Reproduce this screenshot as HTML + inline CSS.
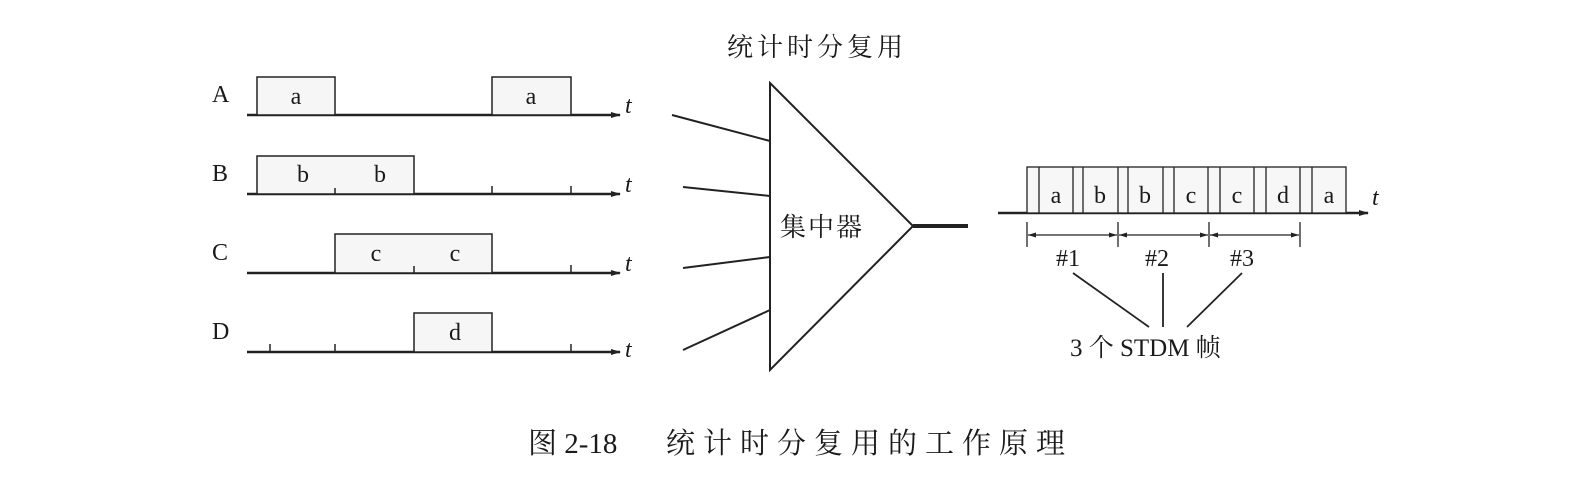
<!DOCTYPE html>
<html><head><meta charset="utf-8"><style>
html,body{margin:0;padding:0;background:#fff;}
svg{display:block}
text{fill:#1a1a1a}
.s{font-family:"Liberation Serif","Noto Serif CJK SC",serif;}
.c{font-family:"Liberation Serif","Noto Serif CJK SC","Noto Sans CJK SC",serif;}
</style></head><body>
<svg width="1580" height="482" viewBox="0 0 1580 482" xmlns="http://www.w3.org/2000/svg">
<defs>
<marker id="ar" markerWidth="10" markerHeight="8" refX="9" refY="4" orient="auto" markerUnits="userSpaceOnUse"><path d="M0,1 L10,4 L0,7 Z" fill="#222"/></marker>
<marker id="sa" markerWidth="8" markerHeight="6" refX="8" refY="3" orient="auto" markerUnits="userSpaceOnUse"><path d="M0,0.5 L8,3 L0,5.5 Z" fill="#222"/></marker>
<marker id="sb" markerWidth="8" markerHeight="6" refX="0" refY="3" orient="auto" markerUnits="userSpaceOnUse"><path d="M8,0.5 L0,3 L8,5.5 Z" fill="#222"/></marker>
</defs>
<g stroke="#222" fill="none">
<line x1="247" y1="115" x2="620" y2="115" stroke-width="2.5" marker-end="url(#ar)"/>
<rect x="257" y="77" width="78" height="38" stroke-width="1.5" fill="#f6f6f6"/>
<rect x="492" y="77" width="79" height="38" stroke-width="1.5" fill="#f6f6f6"/>
<line x1="247" y1="194" x2="620" y2="194" stroke-width="2.5" marker-end="url(#ar)"/>
<rect x="257" y="156" width="157" height="38" stroke-width="1.5" fill="#f6f6f6"/>
<line x1="335" y1="188" x2="335" y2="194" stroke-width="1.5"/>
<line x1="492" y1="186" x2="492" y2="194" stroke-width="1.5"/>
<line x1="571" y1="186" x2="571" y2="194" stroke-width="1.5"/>
<line x1="247" y1="273" x2="620" y2="273" stroke-width="2.5" marker-end="url(#ar)"/>
<rect x="335" y="234" width="157" height="39" stroke-width="1.5" fill="#f6f6f6"/>
<line x1="414" y1="266" x2="414" y2="273" stroke-width="1.5"/>
<line x1="571" y1="265" x2="571" y2="273" stroke-width="1.5"/>
<line x1="247" y1="352" x2="620" y2="352" stroke-width="2.5" marker-end="url(#ar)"/>
<rect x="414" y="313" width="78" height="39" stroke-width="1.5" fill="#f6f6f6"/>
<line x1="270" y1="344" x2="270" y2="352" stroke-width="1.5"/>
<line x1="335" y1="344" x2="335" y2="352" stroke-width="1.5"/>
<line x1="571" y1="344" x2="571" y2="352" stroke-width="1.5"/>
<line x1="672" y1="115" x2="770" y2="141" stroke-width="2"/>
<line x1="683" y1="187" x2="770" y2="196" stroke-width="2"/>
<line x1="683" y1="268" x2="770" y2="257" stroke-width="2"/>
<line x1="683" y1="350" x2="770" y2="310" stroke-width="2"/>
<path d="M770,83 L913,226 L770,370 Z" stroke-width="2"/>
<line x1="913" y1="226" x2="968" y2="226" stroke-width="4"/>
<line x1="998" y1="213" x2="1368" y2="213" stroke-width="2.5" marker-end="url(#ar)"/>
<rect x="1027" y="167" width="319" height="46" stroke-width="1.3" fill="#f7f7f7"/>
<g stroke-width="1.3">
<line x1="1039" y1="167" x2="1039" y2="213"/>
<line x1="1073" y1="167" x2="1073" y2="213"/>
<line x1="1083" y1="167" x2="1083" y2="213"/>
<line x1="1118" y1="167" x2="1118" y2="213"/>
<line x1="1128" y1="167" x2="1128" y2="213"/>
<line x1="1163" y1="167" x2="1163" y2="213"/>
<line x1="1174" y1="167" x2="1174" y2="213"/>
<line x1="1208" y1="167" x2="1208" y2="213"/>
<line x1="1220" y1="167" x2="1220" y2="213"/>
<line x1="1254" y1="167" x2="1254" y2="213"/>
<line x1="1266" y1="167" x2="1266" y2="213"/>
<line x1="1300" y1="167" x2="1300" y2="213"/>
<line x1="1312" y1="167" x2="1312" y2="213"/>
</g>
<g stroke-width="1.3">
<line x1="1027" y1="222" x2="1027" y2="247"/>
<line x1="1118" y1="222" x2="1118" y2="247"/>
<line x1="1209" y1="222" x2="1209" y2="247"/>
<line x1="1300" y1="222" x2="1300" y2="247"/>
<line x1="1028" y1="235" x2="1117" y2="235" marker-start="url(#sb)" marker-end="url(#sa)"/>
<line x1="1119" y1="235" x2="1208" y2="235" marker-start="url(#sb)" marker-end="url(#sa)"/>
<line x1="1210" y1="235" x2="1299" y2="235" marker-start="url(#sb)" marker-end="url(#sa)"/>
</g>
<line x1="1073" y1="273" x2="1149" y2="327" stroke-width="1.8"/>
<line x1="1163" y1="273" x2="1163" y2="327" stroke-width="1.8"/>
<line x1="1242" y1="273" x2="1187" y2="327" stroke-width="1.8"/>
</g>
<g class="s" font-size="24">
<text x="212" y="102">A</text>
<text x="212" y="181">B</text>
<text x="212" y="260">C</text>
<text x="212" y="339">D</text>
<g font-style="italic"><text x="625" y="113">t</text><text x="625" y="192">t</text><text x="625" y="271">t</text><text x="625" y="357">t</text><text x="1372" y="205">t</text></g>
<g text-anchor="middle">
<text x="296" y="104">a</text><text x="531" y="104">a</text>
<text x="303" y="182">b</text><text x="380" y="182">b</text>
<text x="376" y="261">c</text><text x="455" y="261">c</text>
<text x="455" y="340">d</text>
<text x="1056" y="203">a</text><text x="1100" y="203">b</text><text x="1145" y="203">b</text><text x="1191" y="203">c</text><text x="1237" y="203">c</text><text x="1283" y="203">d</text><text x="1329" y="203">a</text>
<text x="1068" y="266">#1</text><text x="1157" y="266">#2</text><text x="1242" y="266">#3</text>
</g>
</g>
<text class="c" x="727" y="56" font-size="26" letter-spacing="4">统计时分复用</text>
<text class="c" x="780" y="236" font-size="26" letter-spacing="2">集中器</text>
<text class="c" x="1070" y="356" font-size="25">3 个 STDM 帧</text>
<text class="c" x="528" y="453" font-size="29">图 2-18</text>
<text class="c" x="666" y="453" font-size="29" letter-spacing="8">统计时分复用的工作原理</text>
</svg>
</body></html>
